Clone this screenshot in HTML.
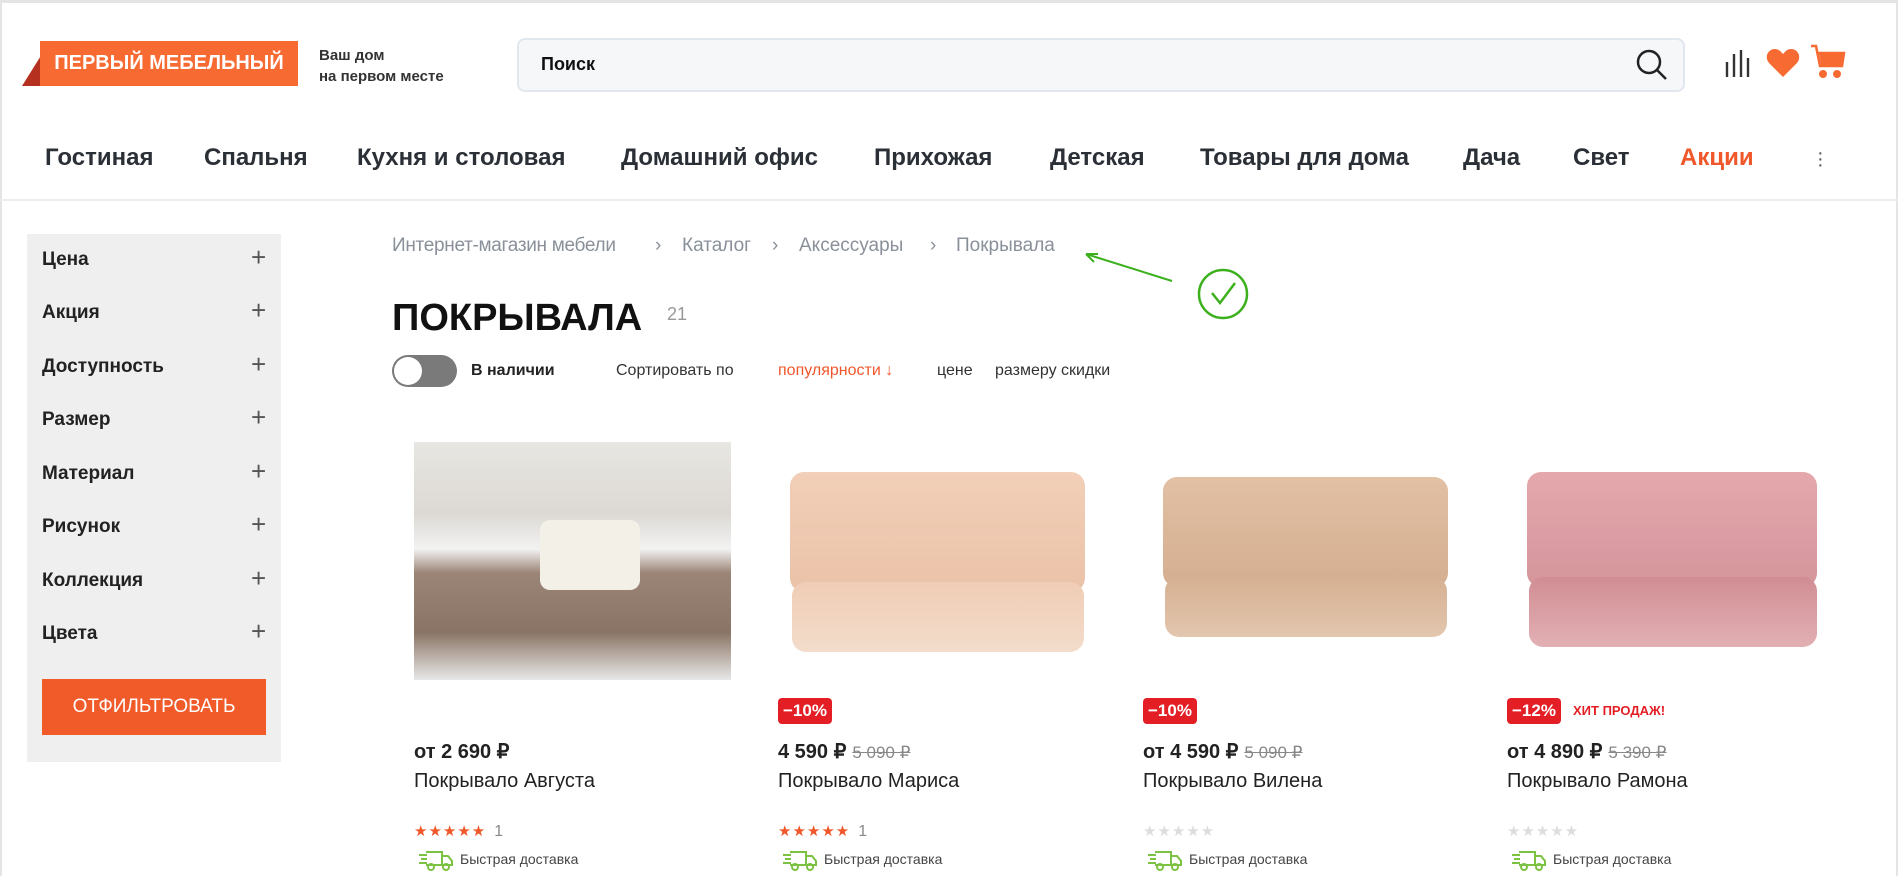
<!DOCTYPE html>
<html><head><meta charset="utf-8">
<style>
*{margin:0;padding:0;box-sizing:border-box}
body{width:1898px;height:876px;overflow:hidden;background:#fff;font-family:"Liberation Sans",sans-serif;color:#222;position:relative}
.a{position:absolute;white-space:nowrap}
.nav{font-size:24px;font-weight:bold;color:#2b2f36;top:144px}
.side{left:27px;top:234px;width:254px;height:528px;background:#efefef}
.si{position:absolute;left:15px;font-size:19px;font-weight:bold;color:#222}
.pl{position:absolute;left:224px;font-size:26px;color:#555;font-weight:normal}
.img{position:absolute;top:442px;width:317px;height:238px}
.badge{position:absolute;top:698px;height:26px;background:#e31e24;color:#fff;font-weight:bold;font-size:17px;line-height:26px;padding:0 5px;border-radius:4px}
.price{position:absolute;top:739px;font-size:20px;font-weight:bold}
.price s{font-weight:normal;color:#888;font-size:17px;margin-left:6px}
.name{position:absolute;top:770px;font-size:20px}
.stars{position:absolute;top:822px;font-size:15px;color:#f0572a;letter-spacing:1px}
.stars.g{color:#ddd}
.stars span{color:#888;margin-left:8px;font-size:16px}
.del{position:absolute;top:851px;font-size:14px;color:#444;padding-left:46px}
.bc{top:235px;font-size:19px;color:#8a9099}
.bl{position:absolute;border-radius:14px}
</style></head><body>
<div class="a" style="left:0;top:0;width:1898px;height:3px;background:#e4e4e4"></div>
<div class="a" style="left:0;top:0;width:2px;height:876px;background:#e4e4e4"></div>
<div class="a" style="left:1896px;top:0;width:2px;height:876px;background:#e4e4e4"></div>
<!-- logo -->
<div class="a" style="left:22px;top:54px;width:0;height:0;border-left:20px solid transparent;border-bottom:32px solid #b5301e"></div>
<div class="a" style="left:40px;top:41px;width:258px;height:45px;background:#f76a32;color:#fff;font-weight:bold;font-size:20px;line-height:45px;text-align:center">ПЕРВЫЙ МЕБЕЛЬНЫЙ</div>
<div class="a" style="left:319px;top:45px;font-size:15px;font-weight:bold;line-height:21px;color:#333">Ваш дом<br>на первом месте</div>
<!-- search -->
<div class="a" style="left:517px;top:38px;width:1168px;height:54px;background:#f5f7f9;border:2px solid #e1e7ee;border-radius:8px"></div>
<div class="a" style="left:541px;top:54px;font-size:18px;font-weight:bold;color:#111">Поиск</div>
<svg class="a" style="left:1635px;top:48px" width="34" height="34" viewBox="0 0 34 34"><circle cx="14" cy="14" r="11" fill="none" stroke="#222" stroke-width="2.5"/><path d="M22 22l9 9" stroke="#222" stroke-width="2.5"/></svg>
<svg class="a" style="left:1724px;top:48px" width="28" height="30"><path d="M3 14v15M10 6v23M17 2v27M24 10v19" stroke="#333" stroke-width="2.4"/></svg>
<svg class="a" style="left:1766px;top:48px" width="34" height="30" viewBox="0 0 34 30"><path d="M17 29L3 15C-2 9 2 1 9 1c4 0 6 3 8 5 2-2 4-5 8-5 7 0 11 8 6 14z" fill="#f76a32"/></svg>
<svg class="a" style="left:1810px;top:44px" width="36" height="36" viewBox="0 0 36 36"><path d="M1 2h5l4 20h22l2-13H8" fill="none" stroke="#f76a32" stroke-width="2.5"/><path d="M9 10h24l-2 11H11z" fill="#f76a32"/><circle cx="13" cy="30" r="4" fill="#f76a32"/><circle cx="27" cy="30" r="4" fill="#f76a32"/></svg>
<!-- nav -->
<div class="a nav" style="left:45px">Гостиная</div>
<div class="a nav" style="left:204px">Спальня</div>
<div class="a nav" style="left:357px">Кухня и столовая</div>
<div class="a nav" style="left:621px">Домашний офис</div>
<div class="a nav" style="left:874px">Прихожая</div>
<div class="a nav" style="left:1050px">Детская</div>
<div class="a nav" style="left:1200px">Товары для дома</div>
<div class="a nav" style="left:1463px">Дача</div>
<div class="a nav" style="left:1573px">Свет</div>
<div class="a nav" style="left:1680px;color:#f0572a">Акции</div>
<div class="a" style="left:1817px;top:150px;font-size:20px;color:#555;line-height:6px">·<br>·<br>·</div>
<div class="a" style="left:0;top:199px;width:1898px;height:2px;background:#e8edf2"></div>
<!-- sidebar -->
<div class="a side">
<div class="si" style="top:15px">Цена</div><div class="pl" style="top:8px">+</div>
<div class="si" style="top:68px">Акция</div><div class="pl" style="top:61px">+</div>
<div class="si" style="top:122px">Доступность</div><div class="pl" style="top:115px">+</div>
<div class="si" style="top:175px">Размер</div><div class="pl" style="top:168px">+</div>
<div class="si" style="top:229px">Материал</div><div class="pl" style="top:222px">+</div>
<div class="si" style="top:282px">Рисунок</div><div class="pl" style="top:275px">+</div>
<div class="si" style="top:336px">Коллекция</div><div class="pl" style="top:329px">+</div>
<div class="si" style="top:389px">Цвета</div><div class="pl" style="top:382px">+</div>
<div style="position:absolute;left:15px;top:445px;width:224px;height:56px;background:#f15a29;color:#fff;font-size:19px;text-align:center;line-height:56px">ОТФИЛЬТРОВАТЬ</div>
</div>
<!-- breadcrumb -->
<div class="a bc" style="left:392px;letter-spacing:-0.3px">Интернет-магазин мебели</div>
<div class="a bc" style="left:655px">›</div>
<div class="a bc" style="left:682px">Каталог</div>
<div class="a bc" style="left:772px">›</div>
<div class="a bc" style="left:799px">Аксессуары</div>
<div class="a bc" style="left:930px">›</div>
<div class="a bc" style="left:956px">Покрывала</div>
<svg class="a" style="left:1080px;top:245px" width="180" height="80"><path d="M92 36L6 9M6 9l12 0M6 9l8 8" stroke="#3db01e" stroke-width="2" fill="none"/><circle cx="143" cy="49" r="24" fill="none" stroke="#3db01e" stroke-width="2.5"/><path d="M132 48l8 10 15-20" stroke="#3db01e" stroke-width="2.5" fill="none"/></svg>
<div class="a" style="left:392px;top:297px;font-size:38px;font-weight:bold;color:#111">ПОКРЫВАЛА</div>
<div class="a" style="left:667px;top:304px;font-size:18px;color:#999">21</div>
<!-- toggle row -->
<div class="a" style="left:392px;top:355px;width:65px;height:32px;border-radius:16px;background:#7a7a7a"></div>
<div class="a" style="left:394px;top:357px;width:28px;height:28px;border-radius:50%;background:#fff"></div>
<div class="a" style="left:471px;top:362px;font-size:16px;font-weight:bold">В наличии</div>
<div class="a" style="left:616px;top:362px;font-size:16px;color:#333">Сортировать по</div>
<div class="a" style="left:778px;top:362px;font-size:16px;color:#f0572a">популярности ↓</div>
<div class="a" style="left:937px;top:362px;font-size:16px;color:#333">цене</div>
<div class="a" style="left:995px;top:362px;font-size:16px;color:#333">размеру скидки</div>
<!-- images -->
<div class="img" style="left:414px;background:linear-gradient(180deg,#e8e6e2 0%,#dcd9d4 30%,#f2f2f2 45%,#9b8576 55%,#8a7465 80%,#e8e8e8 100%)"></div>
<div class="a" style="left:540px;top:520px;width:100px;height:70px;background:#f3f0e8;border-radius:10px"></div>
<div class="img" style="left:778px;background:#fff">
<div class="bl" style="left:12px;top:30px;width:295px;height:120px;background:linear-gradient(180deg,#f2cfb8,#eac2a8)"></div>
<div class="bl" style="left:14px;top:140px;width:292px;height:70px;background:linear-gradient(180deg,#f0cdb5,#f3dccb)"></div></div>
<div class="img" style="left:1143px;background:#fff">
<div class="bl" style="left:20px;top:35px;width:285px;height:110px;background:linear-gradient(180deg,#e2c0a4,#d4ae90)"></div>
<div class="bl" style="left:22px;top:135px;width:282px;height:60px;background:linear-gradient(180deg,#d6b092,#e2c6ae)"></div></div>
<div class="img" style="left:1507px;background:#fff">
<div class="bl" style="left:20px;top:30px;width:290px;height:115px;background:linear-gradient(180deg,#e4a8ad,#d4959b)"></div>
<div class="bl" style="left:22px;top:135px;width:288px;height:70px;background:linear-gradient(180deg,#d08d93,#e2b0b4)"></div></div>
<!-- cards -->
<div class="badge" style="left:778px">−10%</div>
<div class="badge" style="left:1143px">−10%</div>
<div class="badge" style="left:1507px">−12%</div>
<div class="a" style="left:1573px;top:703px;font-size:13px;font-weight:bold;color:#e31e24">ХИТ ПРОДАЖ!</div>
<div class="price" style="left:414px">от 2 690 ₽</div>
<div class="price" style="left:778px">4 590 ₽<s>5 090 ₽</s></div>
<div class="price" style="left:1143px">от 4 590 ₽<s>5 090 ₽</s></div>
<div class="price" style="left:1507px">от 4 890 ₽<s>5 390 ₽</s></div>
<div class="name" style="left:414px">Покрывало Августа</div>
<div class="name" style="left:778px">Покрывало Мариса</div>
<div class="name" style="left:1143px">Покрывало Вилена</div>
<div class="name" style="left:1507px">Покрывало Рамона</div>
<div class="stars" style="left:414px">★★★★★<span>1</span></div>
<div class="stars" style="left:778px">★★★★★<span>1</span></div>
<div class="stars g" style="left:1143px">★★★★★</div>
<div class="stars g" style="left:1507px">★★★★★</div>
<div class="del" style="left:414px">Быстрая доставка</div>
<div class="del" style="left:778px">Быстрая доставка</div>
<div class="del" style="left:1143px">Быстрая доставка</div>
<div class="del" style="left:1507px">Быстрая доставка</div>
<svg class="a" style="left:418px;top:849px" width="36" height="22"><g fill="none" stroke="#7cc242" stroke-width="2"><path d="M8 3h16v13H8M24 7h6l4 5v4h-10M1 6h8M3 10h6M1 14h8"/><circle cx="13" cy="18" r="3"/><circle cx="28" cy="18" r="3"/></g></svg>
<svg class="a" style="left:782px;top:849px" width="36" height="22"><g fill="none" stroke="#7cc242" stroke-width="2"><path d="M8 3h16v13H8M24 7h6l4 5v4h-10M1 6h8M3 10h6M1 14h8"/><circle cx="13" cy="18" r="3"/><circle cx="28" cy="18" r="3"/></g></svg>
<svg class="a" style="left:1147px;top:849px" width="36" height="22"><g fill="none" stroke="#7cc242" stroke-width="2"><path d="M8 3h16v13H8M24 7h6l4 5v4h-10M1 6h8M3 10h6M1 14h8"/><circle cx="13" cy="18" r="3"/><circle cx="28" cy="18" r="3"/></g></svg>
<svg class="a" style="left:1511px;top:849px" width="36" height="22"><g fill="none" stroke="#7cc242" stroke-width="2"><path d="M8 3h16v13H8M24 7h6l4 5v4h-10M1 6h8M3 10h6M1 14h8"/><circle cx="13" cy="18" r="3"/><circle cx="28" cy="18" r="3"/></g></svg>
</body></html>
